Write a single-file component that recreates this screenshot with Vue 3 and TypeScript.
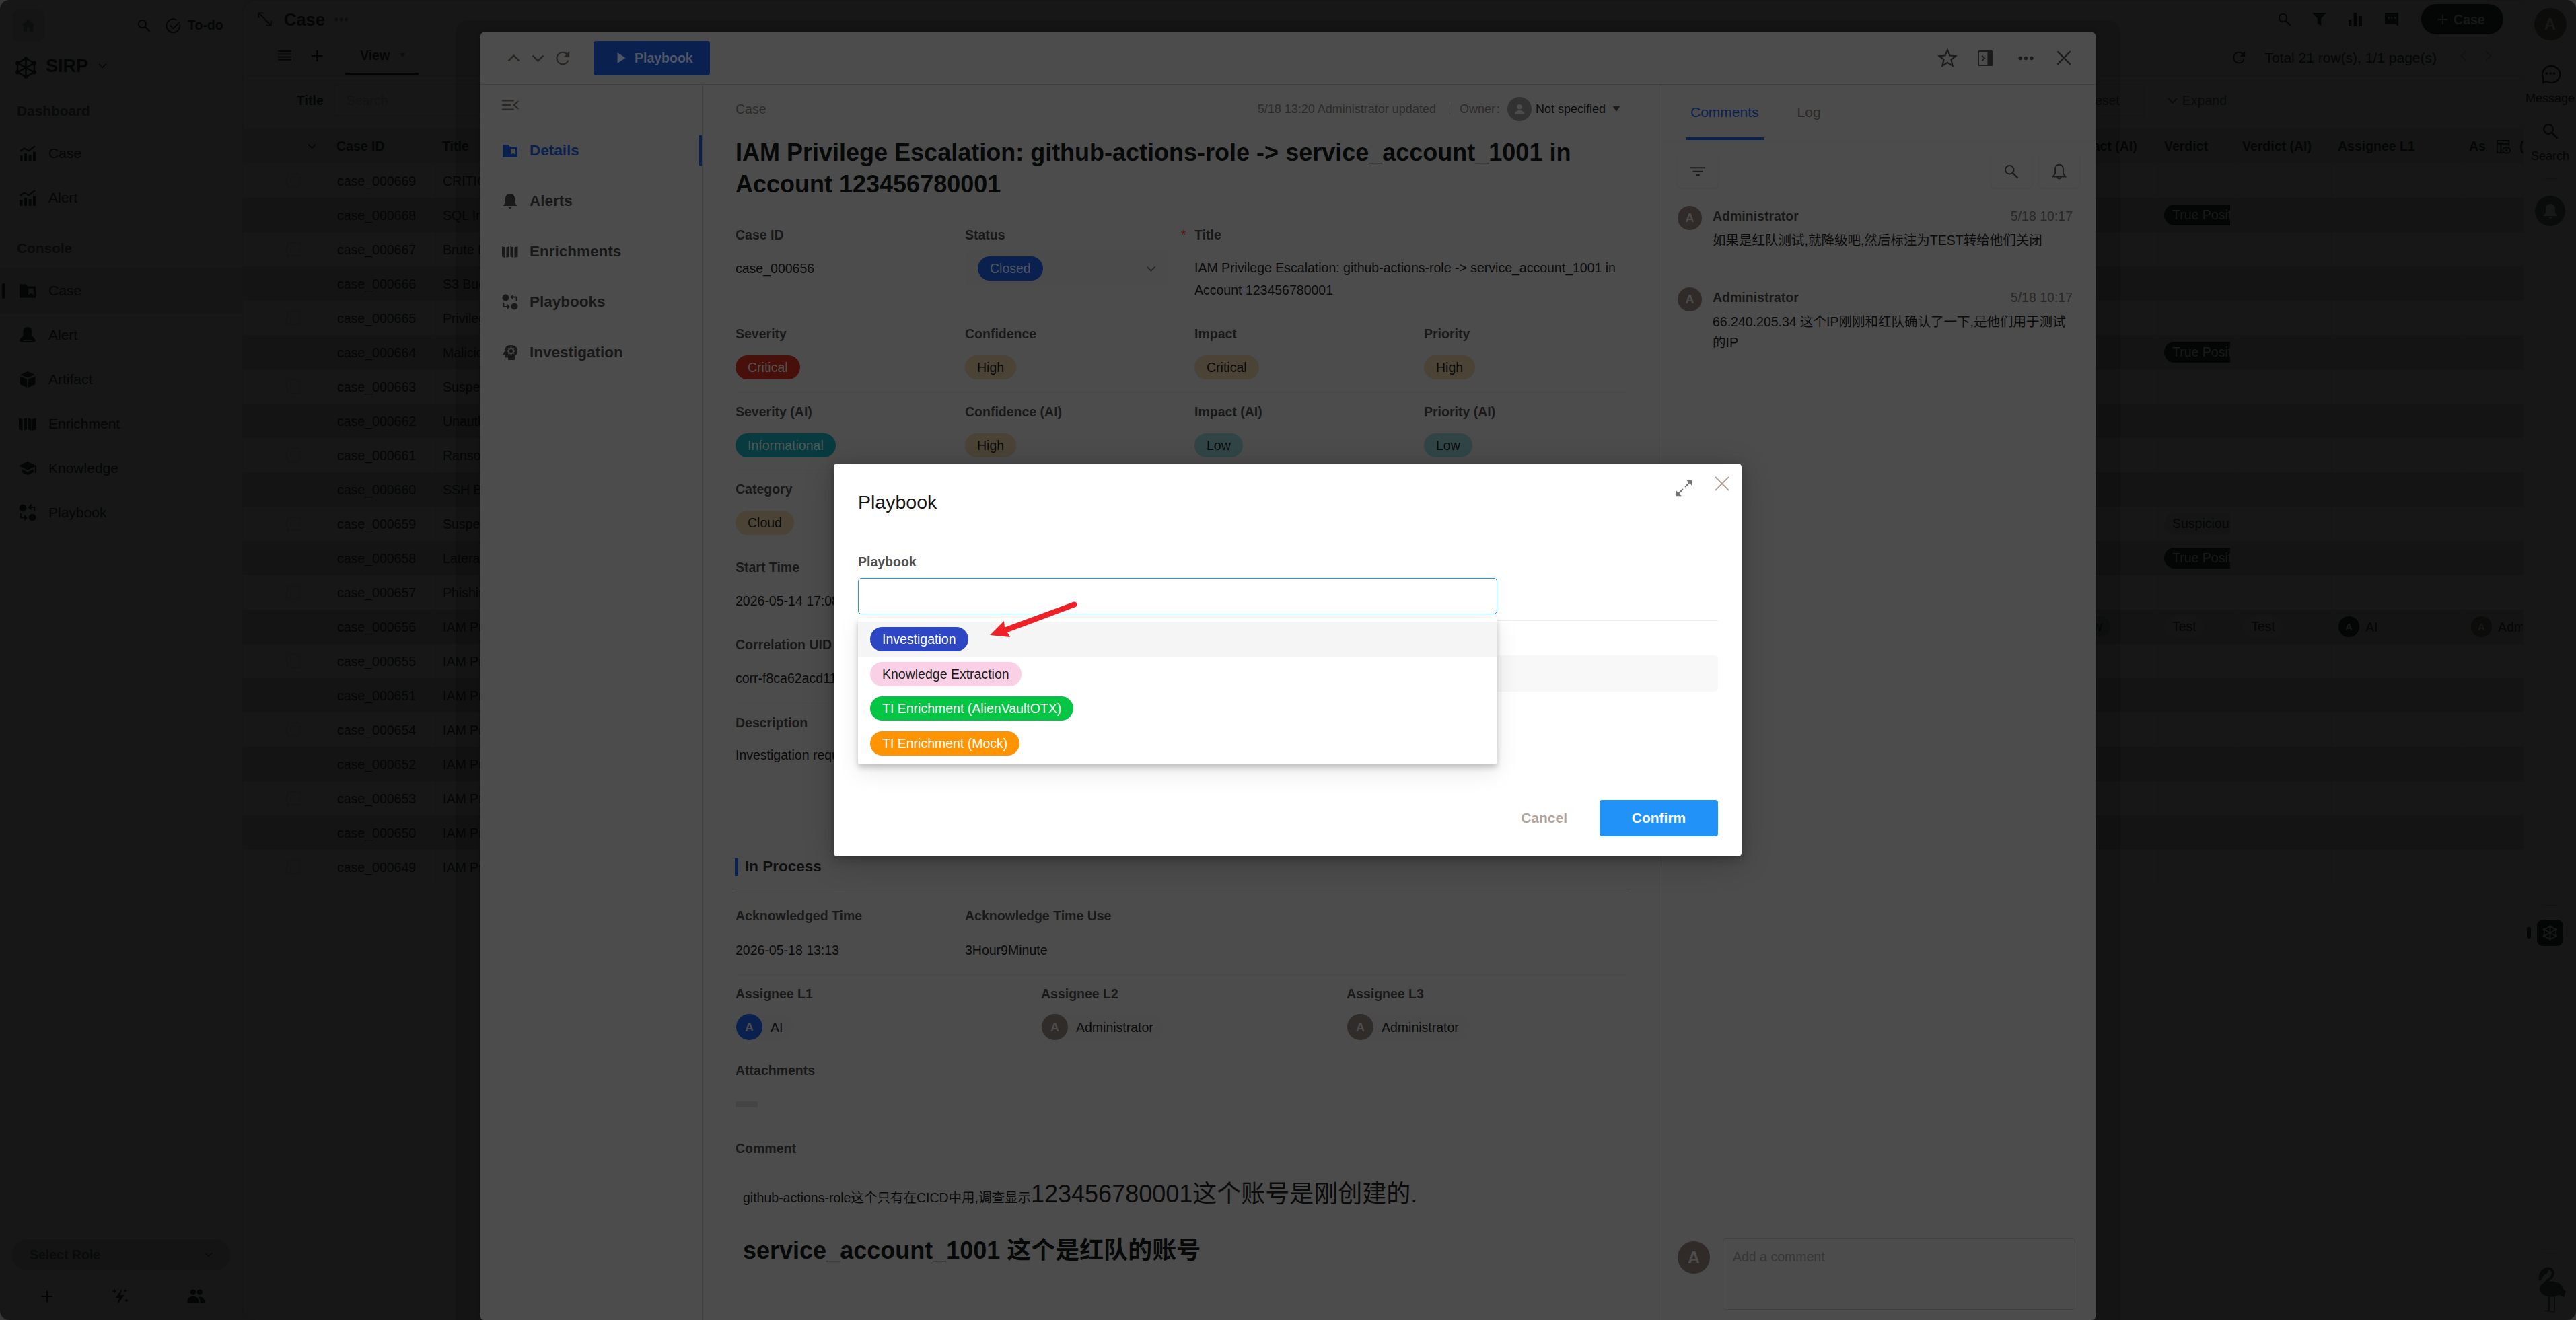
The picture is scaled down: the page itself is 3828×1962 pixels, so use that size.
<script setup lang="ts">
interface Glyph { box: string; body: string }
interface NavItem { icon: string; label: string; active?: boolean }
interface Tag { text: string; tone: string }
interface Row { id: string; title: string; verdict?: Tag; impact?: string; test?: boolean }
interface Field { label: string; tag?: Tag; text?: string }

const line = (d: string, w = 2) => `<path d="${d}" fill="none" stroke="currentColor" stroke-width="${w}"/>`
const fill = (d: string) => `<path d="${d}" fill="currentColor" fill-rule="evenodd"/>`
const glyph = (body: string, box = '0 0 24 24'): Glyph => ({ box, body })

const glyphs: Record<string, Glyph> = {
  home: glyph(fill('M12 2 1 11h3v11h6v-7h4v7h6V11h3z')),
  search: glyph('<circle cx="9" cy="9" r="6.8" fill="none" stroke="currentColor" stroke-width="2.2"/>' + line('M14 14l8.5 8.5', 2.6)),
  check: glyph(line('M22 9.5A10.4 10.4 0 1 1 17.5 3', 2) + line('M7 11l5 5L22.5 5', 2)),
  cube: glyph(line('M12 2l9 5v10l-9 5-9-5V7zM12 2v20M3 7l18 10M21 7L3 17', 1.8) +
    '<g fill="currentColor"><circle cx="12" cy="2.4" r="2.2"/><circle cx="21" cy="7" r="2.2"/><circle cx="21" cy="17" r="2.2"/><circle cx="12" cy="21.6" r="2.2"/><circle cx="3" cy="17" r="2.2"/><circle cx="3" cy="7" r="2.2"/></g>'),
  down: glyph(line('M2 7l10 10L22 7', 3)),
  up: glyph(line('M2 17L12 7l10 10', 3)),
  left: glyph(line('M17 2L7 12l10 10', 3)),
  right: glyph(line('M7 2l10 10L7 22', 3)),
  chart: glyph(fill('M1 15h4v8H1zM7.5 12h3.5v11H7.500zM13.500 14H17v9h-3.500zM19.500 10H23v13h-3.500z') + line('M1.500 9l6-4 6 3.500L22 2', 2)),
  folder: glyph(fill('M1 3h8l3 3h11v16H1zM13 9v9l3.500-2.500L20 18V9z')),
  bell: glyph(fill('M12 1c-4.500 0-7 3-7 7.500V14l-3.500 5h21L19 14V8.500C19 4 16.500 1 12 1zM9 20.500h6L12 23.500z')),
  bellWide: glyph(fill('M12 1C8 1 6 4 6 8v5C5 15 2 16 1 20c0 3 22 3 22 0-1-4-4-5-5-7V8c0-4-2-7-6-7zM6 18.500h12v1.500H6z')),
  bellLine: glyph(line('M12 2.500c-3.500 0-5.500 2.500-5.500 6v6L3.500 19h17l-3-4.500v-6c0-3.500-2-6-5.500-6zM9.500 19c0 3.500 5 3.500 5 0', 1.800)),
  box: glyph(fill('M12 1l10 4.500-10 4.200L2 5.500zM1.500 7.500l9.700 4V23l-9.700-4.500zM22.500 7.500l-9.700 4V23l9.700-4.500z')),
  map: glyph(fill('M0 4l5 1.500V21l-5-1.500zM6.500 5.500L11 4v15.500L6.500 21zM12.500 4l4.500 1.500V21l-4.500-1.500zM18.500 5.500L23.500 4v15.500L18.500 21z')),
  cap: glyph(fill('M12 2.500L0 8.500l12 6 10-5v9h2V8.500zM4 13v4.500l8 4 8-4V13l-8 4z')),
  flow: glyph('<circle cx="5.500" cy="5.500" r="5" fill="currentColor"/><circle cx="18.500" cy="18.500" r="5" fill="currentColor"/>' +
    line('M21.500 10V4.500H15M2.500 13v6H8', 1.800) + fill('M17 0v9l-4.500-4.500zM7.500 14.500v9L12 19z')),
  plus: glyph(line('M12 1v22M1 12h22', 2.800)),
  bolt: glyph(fill('M15 1L6 14h5L9 23l10-13h-6z') + line('M4 1v6M1 4h6M20 2v3M18.500 3.500h3M22 16v4M20 18h4', 1.500)),
  people: glyph('<circle cx="8.500" cy="6.500" r="3.600" fill="currentColor"/><circle cx="17" cy="6.500" r="3.600" fill="currentColor"/>' +
    fill('M1 20c0-6 3-8 7.500-8s7.500 2 7.500 8zM17.500 20c0-3-.5-5.500-2-7.500 5 0 8 2 8 7.500z')),
  resize: glyph(line('M3 3l18 18', 2) + line('M1.500 10V1.500H10M14 22.500h8.500V14', 2)),
  dots: glyph('<g fill="currentColor"><circle cx="3.300" cy="12" r="2.900"/><circle cx="12" cy="12" r="2.900"/><circle cx="20.700" cy="12" r="2.900"/></g>'),
  lines: glyph(line('M0 3h24M0 9h24M0 15h24M0 21h24', 2.600)),
  caret: glyph(fill('M1 4h22L12 21z')),
  funnel: glyph(fill('M0 1h24l-9 10v12l-6-4v-8z')),
  bars: glyph(fill('M0 12h5.500v12H0zM9 0h5.500v24H9zM18.500 6H24v18h-5.500z')),
  chat: glyph(fill('M1 1h22v22l-5-4H1zM6 8v2.500h2.500V8zM11 8v2.500h2.500V8zM16 8v2.500h2.500V8z')),
  refresh: glyph(line('M21 15.500A10 10 0 1 1 20 6.500', 2.300) + fill('M23 0v10H13.500z')),
  message: glyph(line('M7 21.500A10.500 10 0 1 0 3.200 17L3.500 23z', 1.800) + '<g fill="currentColor"><circle cx="7.500" cy="12" r="1.500"/><circle cx="12" cy="12" r="1.500"/><circle cx="16.500" cy="12" r="1.500"/></g>'),
  columns: glyph(line('M11 22H2V2h19v9M2 7.500h19M8 7.500V22', 2) + '<ellipse cx="17" cy="18" rx="6" ry="4.500" fill="none" stroke="currentColor" stroke-width="2"/><circle cx="17" cy="18" r="1.600" fill="currentColor"/>'),
  play: glyph(fill('M1 0l22 12L1 24z')),
  star: glyph(line('M12 2l3 7 7.500.5-5.800 4.800L18.500 22 12 17.800 5.500 22l1.800-7.700L1.500 9.500 9 9z', 1.900)),
  dock: glyph(fill('M3 0h18a3 3 0 0 1 3 3v18a3 3 0 0 1-3 3H3a3 3 0 0 1-3-3V3a3 3 0 0 1 3-3zM2 3v18l1 1h12V2H3z') + line('M6.500 8l4 4-4 4', 2)),
  close: glyph(line('M1.500 1.500l21 21M22.500 1.500l-21 21', 2.500)),
  closeThin: glyph(line('M1 1l22 22M23 1L1 23', 2.100)),
  fold: glyph(line('M0 4h17M0 12h13M0 20h17', 2.600) + line('M23.500 5L17 12l6.500 7', 2.400)),
  head: glyph(fill('M13 1C6 1 4 5.500 4 10l-3 5h3v4.500h5V23h10v-6c3-2 4-4.500 4-7.500C23 4 19 1 13 1z') +
    '<circle cx="13.500" cy="9.500" r="3.600" fill="none" stroke="#4c4c4c" stroke-width="2"/><path d="M13.500 3.500v2.500M13.500 13v2.500M7.500 9.500H10M17 9.500h2.500M9.300 5.300L11 7M16 12l1.700 1.700M17.700 5.300L16 7M11 12l-1.700 1.700" stroke="#4c4c4c" stroke-width="1.800"/>'),
  filter: glyph(line('M0 4.500h24M4 12.500h16M9 20h6', 3)),
  person: glyph('<circle cx="12" cy="8" r="4.500" fill="currentColor"/>' + fill('M3.500 21c0-9 17-9 17 0z')),
  expand: glyph(line('M13.500 10.500l7-7M10.500 13.500l-7 7', 2) + fill('M15.500 0.800h7.700V8.500zM0.800 15.500v7.700H8.500z')),
  flamingo: glyph(fill('M12 9C4 11 0 18 1 28c5 2 4-7 9-9 5-1 7-8 2-10zM30 36l11 8-3 9-11-5z') +
    line('M11 11c11-3 14 8 7 14-5 4-8 6-9 11', 4) + '<ellipse cx="19" cy="41" rx="17" ry="11.500" fill="currentColor"/>' +
    line('M16 51v22M24 51v22M9 73.500h8M18 74.500h7', 1.500), '0 0 42 76'),
}

const dashboards: NavItem[] = [{ icon: 'chart', label: 'Case' }, { icon: 'chart', label: 'Alert' }]
const consoles: NavItem[] = [
  { icon: 'folder', label: 'Case', active: true },
  { icon: 'bellWide', label: 'Alert' },
  { icon: 'box', label: 'Artifact' },
  { icon: 'map', label: 'Enrichment' },
  { icon: 'cap', label: 'Knowledge' },
  { icon: 'flow', label: 'Playbook' },
]
const sections: NavItem[] = [
  { icon: 'folder', label: 'Details', active: true },
  { icon: 'bell', label: 'Alerts' },
  { icon: 'map', label: 'Enrichments' },
  { icon: 'flow', label: 'Playbooks' },
  { icon: 'head', label: 'Investigation' },
]

const positive: Tag = { text: 'True Positive', tone: 'solid' }
const rows: Row[] = [
  { id: '669', title: 'CRITICAL' },
  { id: '668', title: 'SQL Injection', verdict: positive },
  { id: '667', title: 'Brute Force' },
  { id: '666', title: 'S3 Bucket' },
  { id: '665', title: 'Privilege' },
  { id: '664', title: 'Malicious', verdict: positive },
  { id: '663', title: 'Suspected' },
  { id: '662', title: 'Unauthorized' },
  { id: '661', title: 'Ransom' },
  { id: '660', title: 'SSH Brute' },
  { id: '659', title: 'Suspected', verdict: { text: 'Suspicious', tone: 'faint cut' } },
  { id: '658', title: 'Lateral', verdict: positive },
  { id: '657', title: 'Phishing' },
  { id: '656', title: 'IAM Privilege', verdict: { text: 'Test', tone: 'faint' }, impact: 'Low', test: true },
  { id: '655', title: 'IAM Privilege' },
  { id: '651', title: 'IAM Privilege' },
  { id: '654', title: 'IAM Privilege' },
  { id: '652', title: 'IAM Privilege' },
  { id: '653', title: 'IAM Privilege' },
  { id: '650', title: 'IAM Privilege' },
  { id: '649', title: 'IAM Privilege' },
]

const fieldRows: Field[][] = [
  [
    { label: 'Severity', tag: { text: 'Critical', tone: 'red' } },
    { label: 'Confidence', tag: { text: 'High', tone: 'sand' } },
    { label: 'Impact', tag: { text: 'Critical', tone: 'sand' } },
    { label: 'Priority', tag: { text: 'High', tone: 'sand' } },
  ],
  [
    { label: 'Severity (AI)', tag: { text: 'Informational', tone: 'teal' } },
    { label: 'Confidence (AI)', tag: { text: 'High', tone: 'sand' } },
    { label: 'Impact (AI)', tag: { text: 'Low', tone: 'aqua' } },
    { label: 'Priority (AI)', tag: { text: 'Low', tone: 'aqua' } },
  ],
  [{ label: 'Category', tag: { text: 'Cloud', tone: 'sand' } }],
  [{ label: 'Start Time', text: '2026-05-14 17:08' }],
  [{ label: 'Correlation UID', text: 'corr-f8ca62acd11' }],
  [{ label: 'Description', text: 'Investigation requ' }],
]

const assignees = [
  { label: 'Assignee L1', name: 'AI', blue: true },
  { label: 'Assignee L2', name: 'Administrator', blue: false },
  { label: 'Assignee L3', name: 'Administrator', blue: false },
]
const comments = [
  { time: '5/18 10:17', text: '如果是红队测试,就降级吧,然后标注为TEST转给他们关闭' },
  { time: '5/18 10:17', text: '66.240.205.34 这个IP刚刚和红队确认了一下,是他们用于测试的IP' },
]
const options: Tag[] = [
  { text: 'Investigation', tone: 'indigo' },
  { text: 'Knowledge Extraction', tone: 'pink' },
  { text: 'TI Enrichment (AlienVaultOTX)', tone: 'green' },
  { text: 'TI Enrichment (Mock)', tone: 'orange' },
]
</script>

<template>
  <div class="page">
    <aside class="side">
      <div class="side-top">
        <span class="home"><svg class="i22" :viewBox="glyphs.home.box" v-html="glyphs.home.body" /></span>
        <svg class="i20" :viewBox="glyphs.search.box" v-html="glyphs.search.body" />
        <svg class="i23 todo-icon" :viewBox="glyphs.check.box" v-html="glyphs.check.body" />
        <b>To-do</b>
      </div>
      <div class="brand">
        <svg class="i33" :viewBox="glyphs.cube.box" v-html="glyphs.cube.body" />
        <b>SIRP</b>
        <svg class="i13" :viewBox="glyphs.down.box" v-html="glyphs.down.body" />
      </div>
      <h4>Dashboard</h4>
      <nav>
        <div v-for="n in dashboards" :key="n.label" class="nav">
          <svg class="i26" :viewBox="glyphs[n.icon].box" v-html="glyphs[n.icon].body" />{{ n.label }}
        </div>
      </nav>
      <h4 class="second">Console</h4>
      <nav>
        <div v-for="n in consoles" :key="n.label" class="nav" :class="{ on: n.active }">
          <svg class="i26" :viewBox="glyphs[n.icon].box" v-html="glyphs[n.icon].body" />{{ n.label }}
        </div>
      </nav>
      <div class="role"><b>Select Role</b><svg class="i12" :viewBox="glyphs.down.box" v-html="glyphs.down.body" /></div>
      <div class="side-foot">
        <svg class="i18" :viewBox="glyphs.plus.box" v-html="glyphs.plus.body" />
        <svg class="i24" :viewBox="glyphs.bolt.box" v-html="glyphs.bolt.body" />
        <svg class="i28" :viewBox="glyphs.people.box" v-html="glyphs.people.body" />
      </div>
    </aside>

    <main class="main">
      <header class="head">
        <svg class="i21" :viewBox="glyphs.resize.box" v-html="glyphs.resize.body" />
        <b class="name">Case</b>
        <svg class="i20 faded" :viewBox="glyphs.dots.box" v-html="glyphs.dots.body" />
        <div class="tools">
          <svg class="i20" :viewBox="glyphs.search.box" v-html="glyphs.search.body" />
          <svg class="i21" :viewBox="glyphs.funnel.box" v-html="glyphs.funnel.body" />
          <svg class="i20" :viewBox="glyphs.bars.box" v-html="glyphs.bars.body" />
          <svg class="i22" :viewBox="glyphs.chat.box" v-html="glyphs.chat.body" />
          <span class="create"><svg class="i16" :viewBox="glyphs.plus.box" v-html="glyphs.plus.body" /><b>Case</b></span>
        </div>
      </header>
      <div class="views">
        <svg class="i20" :viewBox="glyphs.lines.box" v-html="glyphs.lines.body" preserveAspectRatio="none" />
        <svg class="i18" :viewBox="glyphs.plus.box" v-html="glyphs.plus.body" />
        <span class="view"><b>View</b><svg class="i10 faded" :viewBox="glyphs.caret.box" v-html="glyphs.caret.body" /></span>
        <div class="pager">
          <svg class="i19" :viewBox="glyphs.refresh.box" v-html="glyphs.refresh.body" />
          <span>Total 21 row(s), 1/1 page(s)</span>
          <svg class="i16 dim" :viewBox="glyphs.left.box" v-html="glyphs.left.body" />
          <svg class="i16 dim" :viewBox="glyphs.right.box" v-html="glyphs.right.body" />
        </div>
      </div>
      <div class="filters">
        <b>Title</b><span class="query">Search</span>
        <span class="reset">Reset</span>
        <span class="more"><svg class="i15" :viewBox="glyphs.down.box" v-html="glyphs.down.body" />Expand</span>
      </div>
      <div class="grid thead">
        <span><svg class="i13" :viewBox="glyphs.down.box" v-html="glyphs.down.body" /></span>
        <span>Case ID</span><span>Title</span><span>Impact (AI)</span><span>Verdict</span><span>Verdict (AI)</span><span>Assignee L1</span>
        <span class="last">As<svg class="i22" :viewBox="glyphs.columns.box" v-html="glyphs.columns.body" />(</span>
      </div>
      <div v-for="(r, i) in rows" :key="r.id" class="grid row" :class="{ alt: i % 2 }">
        <span><i v-if="i % 2 === 0" class="tick" /></span>
        <span class="cid">case_000{{ r.id }}</span>
        <span>{{ r.title }}</span>
        <span><em v-if="r.impact" class="chip low">{{ r.impact }}</em></span>
        <span><em v-if="r.verdict" class="chip" :class="r.verdict.tone">{{ r.verdict.text }}</em></span>
        <span><em v-if="r.test" class="chip faint">Test</em></span>
        <span><template v-if="r.test"><i class="mini dark">A</i>AI</template></span>
        <span><template v-if="r.test"><i class="mini">A</i>Administrator</template></span>
      </div>
    </main>

    <aside class="rail">
      <span class="me">A</span>
      <svg class="i30 msg" :viewBox="glyphs.message.box" v-html="glyphs.message.body" />
      <span class="cap">Message</span>
      <svg class="i24 find" :viewBox="glyphs.search.box" v-html="glyphs.search.body" />
      <span class="cap find-cap">Search</span>
      <hr class="r1">
      <span class="ring"><svg class="i24" :viewBox="glyphs.bell.box" v-html="glyphs.bell.body" /></span>
      <hr class="r2">
      <div class="app"><i /><span><svg class="i23" :viewBox="glyphs.cube.box" v-html="glyphs.cube.body" /></span></div>
      <hr class="r3">
      <svg class="bird" :viewBox="glyphs.flamingo.box" v-html="glyphs.flamingo.body" />
    </aside>

    <section class="panel">
      <header class="panel-head">
        <svg class="i19" :viewBox="glyphs.up.box" v-html="glyphs.up.body" />
        <svg class="i19" :viewBox="glyphs.down.box" v-html="glyphs.down.body" />
        <svg class="i21" :viewBox="glyphs.refresh.box" v-html="glyphs.refresh.body" />
        <span class="run"><svg class="i16" :viewBox="glyphs.play.box" v-html="glyphs.play.body" preserveAspectRatio="none" /><b>Playbook</b></span>
        <div class="acts">
          <svg class="i28" :viewBox="glyphs.star.box" v-html="glyphs.star.body" />
          <svg class="i23" :viewBox="glyphs.dock.box" v-html="glyphs.dock.body" />
          <svg class="i23" :viewBox="glyphs.dots.box" v-html="glyphs.dots.body" />
          <svg class="i22" :viewBox="glyphs.close.box" v-html="glyphs.close.body" />
        </div>
      </header>
      <div class="panel-body">
        <nav class="tabs">
          <svg class="i25" :viewBox="glyphs.fold.box" v-html="glyphs.fold.body" preserveAspectRatio="none" />
          <div v-for="s in sections" :key="s.label" class="tab" :class="{ on: s.active }">
            <svg class="i24" :viewBox="glyphs[s.icon].box" v-html="glyphs[s.icon].body" />{{ s.label }}
          </div>
        </nav>

        <article class="record">
          <div class="meta">
            <span>Case</span>
            <div class="owner">
              <span>5/18 13:20 Administrator updated</span><i class="bar" />
              <span>Owner<span class="colon">:</span></span>
              <i class="face"><svg class="i20" :viewBox="glyphs.person.box" v-html="glyphs.person.body" /></i>
              <span class="who">Not specified</span><svg class="i12" :viewBox="glyphs.caret.box" v-html="glyphs.caret.body" preserveAspectRatio="none" />
            </div>
          </div>
          <h1>IAM Privilege Escalation: github-actions-role -&gt; service_account_1001 in Account 123456780001</h1>
          <div class="fields first">
            <div class="field"><label>Case ID</label><div class="val">case_000656</div></div>
            <div class="field"><label>Status</label>
              <div class="val pick"><em class="pill blue">Closed</em><svg class="i15" :viewBox="glyphs.down.box" v-html="glyphs.down.body" /></div>
            </div>
            <div class="field wide"><label><i class="req">*</i>Title</label>
              <p>IAM Privilege Escalation: github-actions-role -&gt; service_account_1001 in Account 123456780001</p>
            </div>
          </div>
          <div v-for="(fr, i) in fieldRows" :key="i" class="fields" :class="{ end: i === 5 }">
            <div v-for="f in fr" :key="f.label" class="field">
              <label>{{ f.label }}</label>
              <div class="val"><em v-if="f.tag" class="pill" :class="f.tag.tone">{{ f.tag.text }}</em>{{ f.text }}</div>
            </div>
          </div>
          <h2><span>In Process</span></h2>
          <div class="fields ack">
            <div class="field"><label>Acknowledged Time</label><div class="val">2026-05-18 13:13</div></div>
            <div class="field"><label>Acknowledge Time Use</label><div class="val">3Hour9Minute</div></div>
          </div>
          <div class="fields thirds">
            <div v-for="a in assignees" :key="a.label" class="field"><label>{{ a.label }}</label>
              <div class="val"><span class="user"><i :class="{ blue: a.blue }">A</i>{{ a.name }}</span></div>
            </div>
          </div>
          <div class="fields files"><div class="field"><label>Attachments</label><i class="none" /></div></div>
          <div class="note">
            <label>Comment</label>
            <p>github-actions-role这个只有在CICD中用,调查显示<big>123456780001这个账号是刚创建的.</big></p>
            <h3>service_account_1001 这个是红队的账号</h3>
          </div>
        </article>

        <aside class="talk">
          <div class="talk-tabs"><span class="on">Comments</span><span>Log</span></div>
          <div class="talk-tools">
            <i><svg class="i22" :viewBox="glyphs.filter.box" v-html="glyphs.filter.body" preserveAspectRatio="none" /></i>
            <i class="push"><svg class="i22" :viewBox="glyphs.search.box" v-html="glyphs.search.body" /></i>
            <i><svg class="i26" :viewBox="glyphs.bellLine.box" v-html="glyphs.bellLine.body" /></i>
          </div>
          <div v-for="(c, i) in comments" :key="i" class="remark">
            <i class="ava">A</i>
            <div class="said">
              <div class="by"><b>Administrator</b><span>{{ c.time }}</span></div>
              <p>{{ c.text }}</p>
            </div>
          </div>
          <div class="compose"><i class="ava big">A</i><div class="typing">Add a comment</div></div>
        </aside>
      </div>
    </section>

    <section class="modal">
      <div class="modal-icons">
        <svg class="i25 grow" :viewBox="glyphs.expand.box" v-html="glyphs.expand.body" />
        <svg class="i22" :viewBox="glyphs.closeThin.box" v-html="glyphs.closeThin.body" />
      </div>
      <h5>Playbook</h5>
      <label>Playbook</label>
      <div class="input" />
      <div class="rule" />
      <div class="ghost" />
      <footer><span class="cancel">Cancel</span><span class="confirm">Confirm</span></footer>
      <div class="menu">
        <div v-for="(o, i) in options" :key="o.text" class="option" :class="{ hot: i === 0 }">
          <em class="pill" :class="o.tone">{{ o.text }}</em>
        </div>
      </div>
      <svg class="arrow" viewBox="0 0 132 56"><path d="M1 50 22 29 23 38.500 125 .8C130 -.5 133 5 128.500 8L27 46 31 53z" fill="#ee2028" /></svg>
    </section>
  </div>
</template>

<style>
body { background: #383838; }
</style>

<style scoped>
.page { position: relative; display: flex; width: 3828px; height: 1962px; overflow: hidden; border-radius: 14px; background: #171717; color: #040606; font: 19.5px/24px "Liberation Sans", "Noto Sans CJK SC", Arial, sans-serif; box-sizing: border-box; }
.page * { box-sizing: border-box; }
svg { display: block; flex: none; overflow: visible; }
i, em { font-style: normal; }
h1, h2, h3, h4, h5, p { margin: 0; }
.i10 { width: 10px; height: 8px; } .i12 { width: 12px; height: 12px; } .i13 { width: 13px; height: 13px; }
.i15 { width: 15px; height: 15px; } .i16 { width: 16px; height: 16px; } .i18 { width: 18px; height: 18px; }
.i19 { width: 19px; height: 19px; } .i20 { width: 20px; height: 20px; } .i21 { width: 21px; height: 21px; }
.i22 { width: 22px; height: 22px; } .i23 { width: 23px; height: 23px; } .i24 { width: 24px; height: 24px; }
.i25 { width: 25px; height: 25px; } .i26 { width: 26px; height: 26px; } .i28 { width: 28px; height: 28px; }
.i30 { width: 30px; height: 30px; } .i33 { width: 33px; height: 33px; }
.faded { color: #0c0d0d; }

.side { width: 360px; flex: none; display: flex; flex-direction: column; }
.side-top { display: flex; align-items: center; height: 48px; margin: 14px 0 0 18px; }
.home { display: grid; place-items: center; width: 48px; height: 48px; margin-right: 138px; border-radius: 12px; background: #151515; color: #0d0f0f; }
.todo-icon { margin: 0 10px 0 22px; }
.side-top b { margin-bottom: 2px; }
.brand { display: flex; align-items: center; height: 34px; margin: 21px 0 0 22px; font-size: 27px; }
.brand b { margin: -5px 15px 0 13px; line-height: 30px; }
.brand .i13 { margin-bottom: 6px; }
.side h4 { margin: 36px 0 0 25px; font-size: 21px; line-height: 24px; color: #090a0a; letter-spacing: -.1px; }
.side h4.second { margin-top: 30px; }
.side nav { margin-top: 18px; }
.nav { position: relative; display: flex; align-items: center; gap: 18px; height: 66px; padding-left: 28px; font-size: 21px; }
.nav.on { background: #151515; }
.nav.on::before { content: ""; position: absolute; left: 3px; top: 22px; width: 5px; height: 23px; border-radius: 3px; background: #030505; }
.role { display: flex; align-items: center; justify-content: space-between; height: 46px; margin: auto 18px 0; padding: 0 26px; border-radius: 23px; background: #141414; color: #090a0a; }
.side-foot { display: flex; align-items: center; justify-content: space-between; height: 28px; margin: 25px 55px 21px 61px; }

.main { width: 3390px; flex: none; border: solid #151515; border-width: 1px 1px 0; border-radius: 18px 0 0 18px; overflow: hidden; }
.head { display: flex; align-items: center; height: 55px; padding: 0 29px 0 22px; }
.name { margin: 0 14px 0 18px; font-size: 25.5px; }
.tools { display: flex; align-items: center; margin-left: auto; }
.tools svg { margin-right: 33px; }
.tools svg:first-child { margin-right: 31px; }
.create { display: flex; align-items: center; width: 122px; height: 45px; padding-left: 24px; border-radius: 23px; background: #040606; color: #171717; }
.tools .create svg { margin-right: 8px; }
.views { display: flex; align-items: center; height: 57px; padding: 0 43px 0 52px; border-bottom: 1px solid #151515; }
.views > .i20 { height: 17px; margin: 0 29px 3px 0; }
.views > .i18 { margin-bottom: 3px; }
.view { display: flex; align-items: center; gap: 14px; width: 109px; height: 56px; margin-left: 33px; padding: 0 0 0 22px; border-bottom: 4px solid #030505; }
.pager { display: flex; align-items: center; margin: 3px 0 0 auto; font-size: 21px; }
.pager span { margin: 0 32px 0 28px; }
.pager .dim { color: #121212; margin-bottom: 6px; }
.pager .dim + .dim { margin-left: 21px; }
.filters { display: flex; align-items: center; height: 78px; padding: 0 440px 6px 80px; }
.query { width: 500px; height: 48px; margin-left: 15px; padding: 11px 18px; border: 1px solid #151515; border-radius: 5px; color: #131313; }
.reset { width: 123px; height: 48px; margin-left: auto; padding: 11px 35px; border: 1px solid #151515; border-radius: 5px; color: #090a0a; }
.more { display: flex; align-items: center; gap: 7px; margin-left: 35px; color: #090a0a; }
.grid { display: grid; grid-template-columns: 127px 159px 2418px 141px 116px 142px 197px 1fr; }
.grid > span { display: flex; align-items: center; min-width: 0; padding-left: 10px; overflow: hidden; white-space: nowrap; }
.thead { height: 52px; background: #151515; font-weight: bold; }
.grid > span:first-child { padding-left: 64px; }
.thead > span:first-child { padding-left: 96px; }
.grid > span:nth-child(2) { padding-left: 12px; }
.thead > span:nth-child(8) { padding-left: 8px; overflow: visible; }
.last svg { margin: 2px 13px 0 15px; }
.row { height: 51px; }
.row.alt { background: #141414; }
.row > span { border-left: 1px solid #151515; }
.row > span:nth-child(-n+2), .row.alt > span { border-left-color: transparent; }
.row > span:nth-child(5) { padding: 0 8px 0 9px; }
.tick { width: 21px; height: 21px; border: 1px solid #141414; border-radius: 4px; }
.chip { display: block; flex: none; height: 31px; padding: 0 12px; border-radius: 16px; line-height: 31px; }
.chip.solid { width: 98px; border-radius: 16px 0 0 16px; background: #040606; color: #191919; overflow: hidden; }
.chip.faint { background: #151515; }
.chip.cut { width: 98px; border-radius: 16px 0 0 16px; overflow: hidden; }
.chip.low { background: #0f1212; }
.mini { display: grid; place-items: center; flex: none; width: 31px; height: 31px; margin: 0 9px 0 0; border-radius: 50%; background: #0c0c0b; color: #191919; font-size: 15px; font-weight: bold; }
.mini.dark { background: #040606; }

.rail { display: flex; flex-direction: column; align-items: center; width: 78px; padding-left: 1px; font-size: 18px; }
.me { display: grid; place-items: center; flex: none; width: 48px; height: 48px; margin-top: 12px; border-radius: 50%; background: #0c0c0b; color: #191919; font-size: 24px; font-weight: bold; }
.msg { margin-top: 34px; }
.cap { margin-top: 10px; }
.find { margin-top: 25px; }
.find-cap { margin-top: 13px; }
.rail hr { width: 24px; height: 1px; flex: none; margin: 0; border: 0; background: #131313; }
.rail .r1 { margin-top: 21px; }
.ring { display: grid; place-items: center; flex: none; width: 45px; height: 45px; margin-top: 25px; border-radius: 50%; background: #0a0c0c; color: #181818; }
.rail .r2 { margin-top: 1009px; }
.app { display: flex; align-items: center; gap: 9px; margin: 21px 15px 0 0; }
.app i { width: 6px; height: 17px; border-radius: 3px; background: #040606; }
.app span { display: grid; place-items: center; width: 39px; height: 39px; border-radius: 9px; background: #040606; color: #171717; }
.rail .r3 { margin-top: 450px; }
.bird { width: 42px; height: 76px; margin: 18px 0 0 6px; color: #070a09; }

.panel { position: absolute; left: 714px; top: 48px; width: 2400px; height: 1914px; border-radius: 5px; background: #4c4c4c; color: #0b0b0b; box-shadow: 0 0 5px rgba(0, 0, 0, .35), 0 19px 0 37px rgba(0, 0, 0, .12); }
.panel-head { display: flex; align-items: center; height: 78px; padding: 0 36px 1px 40px; border-bottom: 1px solid #404040; color: #282522; }
.panel-head > svg { margin-right: 17px; }
.run { display: flex; align-items: center; gap: 13px; width: 173px; height: 51px; margin-left: 18px; padding-left: 35px; border-radius: 4px; background: #0a2150; color: #4f5665; }
.run svg { width: 13px; }
.acts { display: flex; align-items: center; margin-left: auto; color: #1c1c1c; }
.acts .i28 { margin-right: 31px; }
.acts .i23 { margin-right: 37px; }
.acts .i23 + .i23 { margin-right: 34px; }
.panel-body { display: flex; height: 1836px; }
.tabs { width: 330px; flex: none; padding: 20px 0 0; border-right: 1px solid #414141; }
.tabs > svg { height: 20px; margin: 0 0 35px 32px; color: #2a2725; }
.tab { display: flex; align-items: center; gap: 17px; height: 45px; margin-bottom: 30px; padding-left: 32px; font-size: 22.5px; font-weight: bold; color: #191919; }
.tab.on { border-right: 4px solid #0a2150; color: #0a2150; }

.record { width: 1425px; flex: none; padding: 18px 47px 0 49px; border-right: 1px solid #434343; }
.meta { display: flex; align-items: center; justify-content: space-between; height: 36px; color: #2d2b29; }
.owner { display: flex; align-items: center; padding-right: 13px; font-size: 18px; }
.colon { margin-left: 2px; }
.bar { width: 1px; height: 15px; margin: 0 14px 0 20px; background: #3a3a3a; }
.face { display: grid; place-items: center; width: 36px; height: 36px; margin: 0 6px 0 11px; border-radius: 50%; background: #323232; color: #4c4c4c; }
.who { margin-right: 10px; color: #0c0c0c; }
.owner > .i12 { height: 11px; margin-bottom: 2px; color: #1c1c1c; }
h1 { height: 94px; margin-top: 23px; font-size: 36px; line-height: 47px; color: #070808; }
.fields { display: flex; height: 115.5px; padding-top: 16px; border-bottom: 1px solid #4a4a4a; }
.fields.first { height: 147px; margin-top: 24px; border-color: transparent; }
.fields.end { border-color: transparent; }
.field { width: 341px; flex: none; }
.field.wide { width: 640px; }
label { display: block; font-weight: bold; line-height: 24px; color: #191919; }
.val { display: flex; align-items: center; height: 36px; margin-top: 20px; white-space: nowrap; }
.end .val { margin-top: 18px; }
.pick { justify-content: space-between; width: 303px; height: 51px; margin-top: 12.5px; padding: 0 19px; border-radius: 4px; background: #4b4b4b; color: #2b2926; }
.field p { margin-top: 21px; line-height: 33px; }
.req { float: left; margin-left: -20px; color: #60140d; font-weight: normal; }
.pill { display: block; height: 36px; padding: 0 18px; border-radius: 18px; line-height: 36px; white-space: nowrap; }
.red { background: #48100b; color: #515151; }
.blue { background: #0a2150; color: #505560; }
.teal { background: #083b3f; color: #4f5858; }
.sand { background: #4a4336; }
.aqua { background: #314547; }
h2 { height: 49px; margin: 115px 0 0 -1px; border-bottom: 1px solid #383838; font-size: 22.5px; color: #0f0f0f; }
h2 span { display: block; height: 26px; padding-left: 10px; border-left: 5px solid #0a2150; line-height: 24px; }
.ack { margin-top: 8px; }
.ack .val { margin-top: 21px; }
.thirds { height: 114.5px; border-color: transparent; }
.thirds .field { width: 454px; }
.user { display: flex; align-items: center; height: 39px; padding: 0 15px 0 1px; border-radius: 20px; background: #4b4b4b; }
.user i { display: grid; place-items: center; width: 39px; height: 39px; margin-right: 12px; border-radius: 50%; background: #302c29; color: #4c4c4c; font-size: 18px; font-weight: bold; }
.user i.blue { background: #0a2150; }
.files { height: 116px; }
.none { display: block; width: 33px; height: 9px; margin: 34px 0 0; border-radius: 3px; background: #444; }
.note { padding-top: 16px; }
.note p { height: 60px; margin: 26px 0 0 11px; line-height: 60px; white-space: nowrap; }
.note big { font-size: 36px; line-height: 60px; }
.note h3 { height: 60px; margin: 24px 0 0 11px; font-size: 36px; line-height: 60px; color: #070808; white-space: nowrap; }

.talk { display: flex; flex-direction: column; flex: 1; padding-bottom: 15px; }
.talk-tabs { display: flex; gap: 43px; height: 84px; padding-left: 36px; border-bottom: 1px solid #494949; font-size: 21px; color: #2b2927; }
.talk-tabs span { height: 82px; padding: 29px 7px 0; }
.talk-tabs .on { border-bottom: 4px solid #0a2150; color: #0a2150; }
.talk-tools { display: flex; gap: 11px; margin: 20px 24px 0; color: #1c1c1c; }
.talk-tools i { display: grid; place-items: center; width: 60px; height: 49px; border-radius: 5px; background: #4c4c4c; box-shadow: 0 1px 3px rgba(0, 0, 0, .09); }
.talk-tools i:first-child svg { height: 17px; }
.talk-tools .push { margin-left: auto; }
.remark { display: flex; height: 121px; padding: 0 34px 0 24px; }
.talk-tools + .remark { margin-top: 27px; }
.ava { display: grid; place-items: center; flex: none; width: 36px; height: 36px; border-radius: 50%; background: #302b28; color: #4c4c4c; font-size: 18px; font-weight: bold; }
.said { flex: 1; margin: 3px 0 0 16px; }
.by { display: flex; justify-content: space-between; height: 24px; color: #2a2826; }
.by b { color: #191919; }
.said p { margin-top: 9px; line-height: 31px; word-break: break-all; }
.compose { display: flex; margin: auto 30px 0 24px; }
.ava.big { width: 48px; height: 48px; margin: 5px 19px 0 0; font-size: 25px; }
.typing { flex: 1; height: 107px; padding: 15px 14px; border: 1.5px solid #404040; border-radius: 5px; color: #363636; }

.modal { position: absolute; left: 1239px; top: 689px; width: 1349px; height: 584px; padding: 41px 35px 30px 36px; border-radius: 5px; background: #fff; box-shadow: 0 8px 48px rgba(0, 0, 0, .2), 0 4px 14px rgba(0, 0, 0, .25); }
.modal-icons { position: absolute; right: 18px; top: 19px; display: flex; gap: 33px; color: #b09f96; }
.modal-icons .grow { margin-top: 5px; color: #757575; }
.modal h5 { margin-top: -1px; font-size: 28.5px; font-weight: normal; line-height: 34px; color: #151515; }
.modal label { margin-top: 60px; color: #515151; }
.input { width: 950px; height: 54px; margin-top: 12px; border: 1.5px solid #2196f3; border-radius: 5px; }
.rule { height: 1px; margin-top: 9px; background: #eee; }
.ghost { height: 54px; margin-top: 51px; border-radius: 5px; background: #f8f8f8; }
.modal footer { display: flex; align-items: center; justify-content: flex-end; height: 54px; margin-top: 161px; font-size: 21px; font-weight: bold; }
.cancel { margin-right: 48px; color: #b3a39b; }
.confirm { width: 176px; border-radius: 4px; background: #2193f8; color: #fff; line-height: 54px; text-align: center; }
.menu { position: absolute; left: 36px; top: 229px; width: 950px; height: 218px; padding-top: 6px; border-radius: 3px; background: #fff; box-shadow: 0 5px 9px rgba(0, 0, 0, .2), 0 12px 36px rgba(0, 0, 0, .09); }
.option { display: flex; align-items: center; height: 51.7px; padding-left: 18px; }
.hot { background: #f5f5f5; }
.indigo { background: #2d46c4; color: #fff; }
.pink { background: #fad0e6; color: #1c1c1c; }
.green { background: #04c544; color: #fff; }
.orange { background: #ff9300; color: #fff; }
.arrow { position: absolute; left: 231px; top: 205px; width: 132px; height: 56px; }
</style>
